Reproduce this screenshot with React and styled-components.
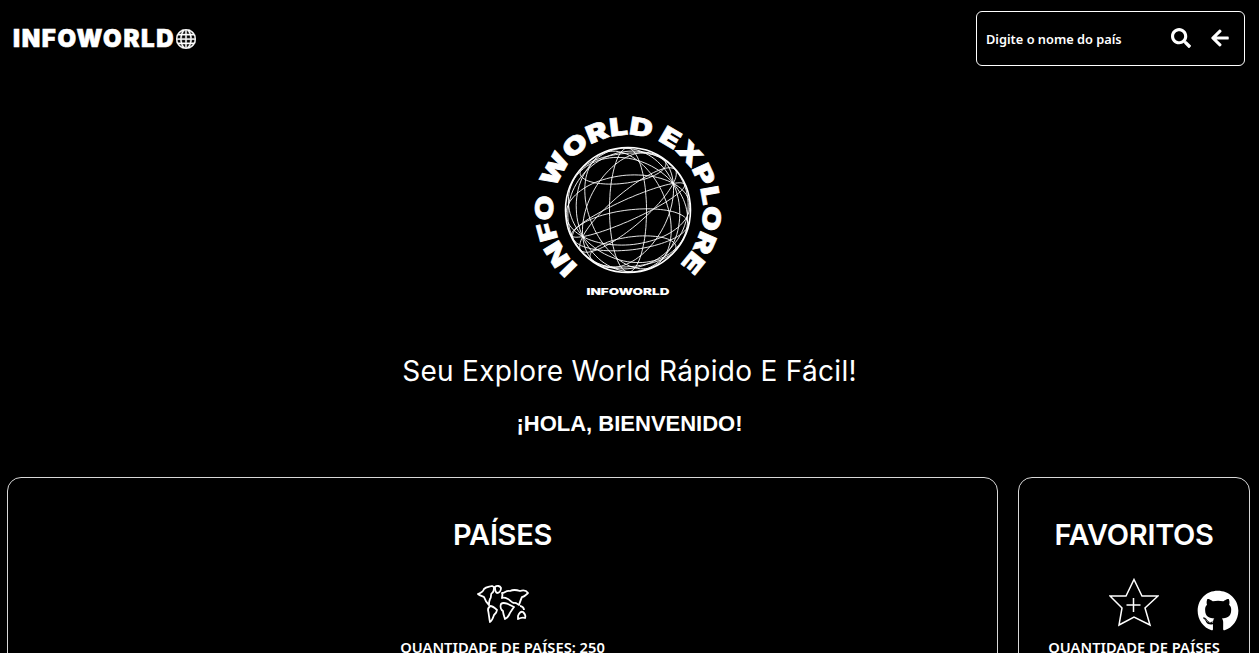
import styled, { createGlobalStyle } from "styled-components";
import { BsGlobe } from "react-icons/bs";
import { FaSearch, FaArrowLeft, FaGithub } from "react-icons/fa";

const GlobalStyle = createGlobalStyle`
  html, body {
    margin: 0;
    height: 100%;
    overflow: hidden;
    background: #000;
    color: #fff;
    font-family: "Inter", "Liberation Sans", sans-serif;
  }
  * { box-sizing: border-box; }
`;

const Page = styled.div`
  display: flex;
  flex-direction: column;
  width: 100%;
`;

const Header = styled.header`
  display: flex;
  align-items: flex-start;
  justify-content: space-between;
  padding: 11px 14px 0 13px;
  height: 78px;
`;

const Brand = styled.div`
  display: flex;
  align-items: center;
  height: 55px;
  font-family: "Inter", sans-serif;
  font-size: 24px;
  font-weight: 900;
  letter-spacing: 1.65px;
  -webkit-text-stroke: 0.6px #fff;

  svg {
    margin-left: 1px;
    font-size: 20px;
    stroke: currentColor;
    stroke-width: 0.35;
  }
`;

const SearchBox = styled.div`
  display: flex;
  align-items: center;
  width: 269px;
  height: 55px;
  padding: 0 14px 0 9px;
  border: 1px solid #fff;
  border-radius: 6px;
`;

const SearchText = styled.span`
  flex: 1;
  font-family: "Noto Sans", sans-serif;
  font-size: 12.8px;
  font-weight: 600;
`;

const IconButton = styled.span`
  display: flex;
  margin-left: ${(props) => props.$gap || 0}px;
  font-size: 20px;
  margin-top: -2px;
`;

const Hero = styled.section`
  display: flex;
  flex-direction: column;
  align-items: center;
  padding-top: 27px;
`;

const LogoSvg = styled.svg`
  display: block;
  width: 220px;
  height: 200px;
`;

const Tagline = styled.h2`
  margin: 45px 0 0;
  font-family: "Inter", sans-serif;
  font-size: 28px;
  line-height: 42px;
  font-weight: 400;
  letter-spacing: 0.3px;
`;

const Welcome = styled.h3`
  margin: 18px 0 0;
  font-family: "Liberation Sans", sans-serif;
  font-size: 22px;
  line-height: 28px;
  font-weight: 700;
`;

const Cards = styled.section`
  display: grid;
  grid-template-columns: 991px 232px;
  gap: 20px;
  padding: 0 9px 0 7px;
  margin-top: 39px;
`;

const Card = styled.article`
  display: flex;
  flex-direction: column;
  align-items: center;
  height: 300px;
  padding-top: 36px;
  border: 1px solid #d8d8d8;
  border-radius: 14px;
`;

const CardTitle = styled.h2`
  margin: 0;
  font-family: "Inter", sans-serif;
  font-size: 29px;
  line-height: 42px;
  font-weight: 600;
  letter-spacing: -0.3px;
`;

const CardIcon = styled.div`
  display: flex;
  align-items: center;
  justify-content: center;
  height: 50px;
  margin-top: 23px;
`;

const CardText = styled.p`
  margin: 7px 0 0;
  font-family: "Noto Sans", sans-serif;
  font-size: 14.7px;
  line-height: 22px;
  font-weight: 600;
  text-align: center;
`;

const GithubLink = styled.a`
  position: fixed;
  right: 20px;
  bottom: 21px;
  display: flex;
  color: #fff;
  font-size: 42px;
`;

// projects great circles of a tilted sphere so the wire globe looks like the logo
function rotate([x, y, z], ax, az) {
  const y1 = y * Math.cos(ax) - z * Math.sin(ax);
  const z1 = y * Math.sin(ax) + z * Math.cos(ax);
  const x2 = x * Math.cos(az) - y1 * Math.sin(az);
  const y2 = x * Math.sin(az) + y1 * Math.cos(az);
  return [x2, y2, z1];
}

function globePath(r, cx, cy, ax, az, meridians, parallels) {
  let d = "";
  const line = (fn) => {
    for (let i = 0; i <= 96; i++) {
      const t = (i / 96) * Math.PI * 2;
      const [x, y] = rotate(fn(t), ax, az);
      d += `${i ? "L" : "M"}${(cx + x * r).toFixed(1)} ${(cy + y * r).toFixed(1)}`;
    }
  };
  for (let m = 0; m < meridians; m++) {
    const a = (m / meridians) * Math.PI + 0.2;
    line((t) => [Math.cos(t) * Math.cos(a), Math.sin(t), Math.cos(t) * Math.sin(a)]);
  }
  parallels.forEach((lat) => {
    line((t) => [Math.cos(t) * Math.cos(lat), Math.sin(lat), Math.sin(t) * Math.cos(lat)]);
  });
  return d;
}

function Logo() {
  return (
    <LogoSvg viewBox="0 0 220 200">
      <defs>
        <path id="logoArc" d="M 58 160.9 A 75 75 0 1 1 158 160.9" />
      </defs>
      <circle cx="108" cy="105" r="62.5" fill="none" stroke="#fff" strokeWidth="1.6" />
      <path
        d={globePath(62, 108, 105, -0.56, 1.04, 6, [])}
        fill="none"
        stroke="#fff"
        strokeWidth="0.9"
      />
      <path
        d={globePath(62, 108, 105, 0.35, -0.12, 3, [0.35, 0.8, -0.8])}
        fill="none"
        stroke="#fff"
        strokeWidth="0.9"
      />
      <text
        fill="#fff"
        stroke="#fff"
        strokeWidth="0.7"
        fontFamily="Inter, sans-serif"
        fontWeight="900"
        fontSize="24.5"
      >
        <textPath href="#logoArc" textLength="359" lengthAdjust="spacingAndGlyphs">
          INFO WORLD EXPLORE
        </textPath>
      </text>
      <text
        x="108"
        y="190"
        fill="#fff"
        textAnchor="middle"
        fontFamily="Inter, sans-serif"
        fontWeight="900"
        fontSize="9.5"
        textLength="83"
        lengthAdjust="spacingAndGlyphs"
      >
        INFOWORLD
      </text>
    </LogoSvg>
  );
}

function WorldIcon() {
  return (
    <svg width="52" height="40" viewBox="0 0 52 40" fill="none" stroke="#fff" strokeWidth="1.8" strokeLinejoin="round">
      <path d="M1 10 C4 9 6 8 7 5 C9 3 12 3 15 2 L17 3 C17 6 17 8 15 9 C13 10 15 13 13 15 C12 17 12 19 12 21 C10 19 8 16 7 13 C5 12 3 12 1 10 Z" />
      <path d="M18 3 C20 1 23 2 24 4 C24 7 22 9 20 9 C18 8 18 5 18 3 Z" />
      <path d="M13 22 C15 22 18 24 20 26 C20 28 18 30 17 31 C16 34 15 37 13 38 C12 34 12 30 11 26 C11 24 12 23 13 22 Z" />
      <path d="M25 9 C28 9 29 6 33 7 C37 5 40 6 43 7 C46 6 49 6 51 9 C49 11 46 13 45 13 C44 15 43 18 42 21 C40 20 39 18 37 19 C35 19 33 16 31 15 C29 14 27 13 25 14 C25 12 26 11 25 9 Z" />
      <path d="M24 20 C26 18 28 19 31 20 C33 21 35 22 37 23 C35 26 33 28 32 31 C31 33 30 34 28 35 C27 32 26 29 26 27 C24 26 23 23 24 20 Z" />
      <path d="M41 32 C42 29 44 27 46 28 C48 30 49 32 48 34 C46 33 43 34 41 35 Z" />
      <path d="M43 22 C45 22 47 24 47 26" />
    </svg>
  );
}

function StarIcon() {
  return (
    <svg width="50" height="52" viewBox="0 0 50 52" fill="none" stroke="#fff" strokeWidth="1.5" strokeLinejoin="miter">
      <path d="M25 1.5 L33 18 L49 18 L36 30 L41 47 L25 39 L10 47 L13 30 L1 18 L17 18 Z" />
      <path d="M24.5 20 V34 M17.5 27 H31.5" />
    </svg>
  );
}

export default function App() {
  return (
    <Page>
      <GlobalStyle />
      <Header>
        <Brand>
          INFOWORLD
          <BsGlobe />
        </Brand>
        <SearchBox>
          <SearchText>Digite o nome do país</SearchText>
          <IconButton><FaSearch /></IconButton>
          <IconButton $gap={19}><FaArrowLeft /></IconButton>
        </SearchBox>
      </Header>
      <Hero>
        <Logo />
        <Tagline>Seu Explore World Rápido E Fácil!</Tagline>
        <Welcome>¡HOLA, BIENVENIDO!</Welcome>
      </Hero>
      <Cards>
        <Card>
          <CardTitle>PAÍSES</CardTitle>
          <CardIcon><WorldIcon /></CardIcon>
          <CardText>QUANTIDADE DE PAÍSES: 250</CardText>
        </Card>
        <Card>
          <CardTitle>FAVORITOS</CardTitle>
          <CardIcon><StarIcon /></CardIcon>
          <CardText>QUANTIDADE DE PAÍSES FAVORITOS: 0</CardText>
        </Card>
      </Cards>
      <GithubLink href="#"><FaGithub /></GithubLink>
    </Page>
  );
}
